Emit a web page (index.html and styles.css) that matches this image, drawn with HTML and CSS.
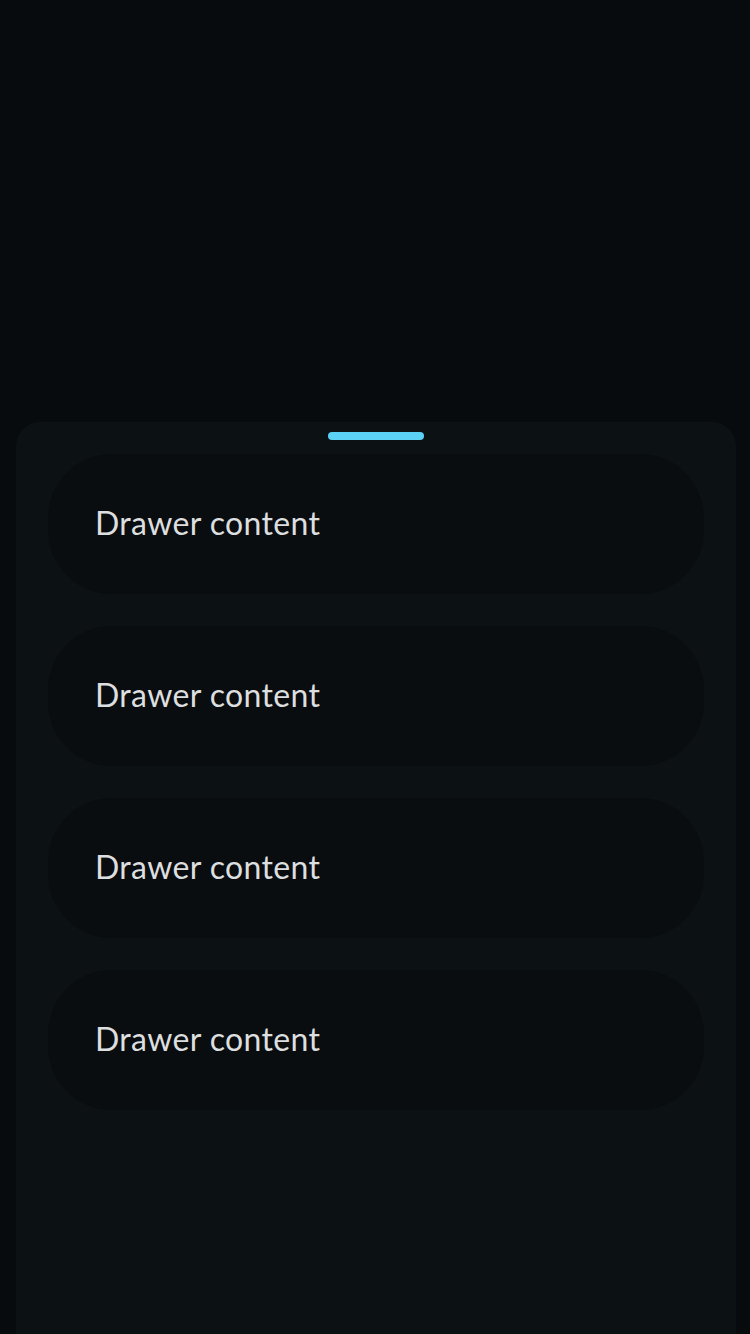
FILE: index.html
```html
<!DOCTYPE html>
<html>
<head>
<meta charset="utf-8">
<link rel="stylesheet" href="styles.css">
</head>
<body>
<div class="screen">
  <div class="drawer">
    <div class="handle"></div>
    <div class="list">
      <div class="item">Drawer content</div>
      <div class="item">Drawer content</div>
      <div class="item">Drawer content</div>
      <div class="item">Drawer content</div>
    </div>
  </div>
</div>
</body>
</html>
```
FILE: styles.css
```css
html, body {
  margin: 0;
  padding: 0;
  background: #070b0e;
}
.screen {
  width: 750px;
  height: 1334px;
  overflow: hidden;
  display: flex;
  flex-direction: column;
  justify-content: flex-end;
  padding: 0 14px 0 16px;
  box-sizing: border-box;
}
.drawer {
  height: 912px;
  background: #0c1114;
  border-radius: 24px 24px 0 0;
  display: flex;
  flex-direction: column;
  align-items: center;
  padding-top: 10px;
  box-sizing: border-box;
}
.handle {
  width: 96px;
  height: 8px;
  border-radius: 4px;
  background: #5bd1f6;
}
.list {
  align-self: stretch;
  padding: 14px 32px 0;
  display: flex;
  flex-direction: column;
  gap: 32px;
}
.item {
  height: 140px;
  box-sizing: border-box;
  border-radius: 64px;
  background: #090d10;
  display: flex;
  align-items: center;
  padding: 0 0 3px 47px;
  font-family: "Lato", "Noto Sans", sans-serif;
  font-size: 32px;
  letter-spacing: 0.35px;
  color: #dcdedf;
}
```
